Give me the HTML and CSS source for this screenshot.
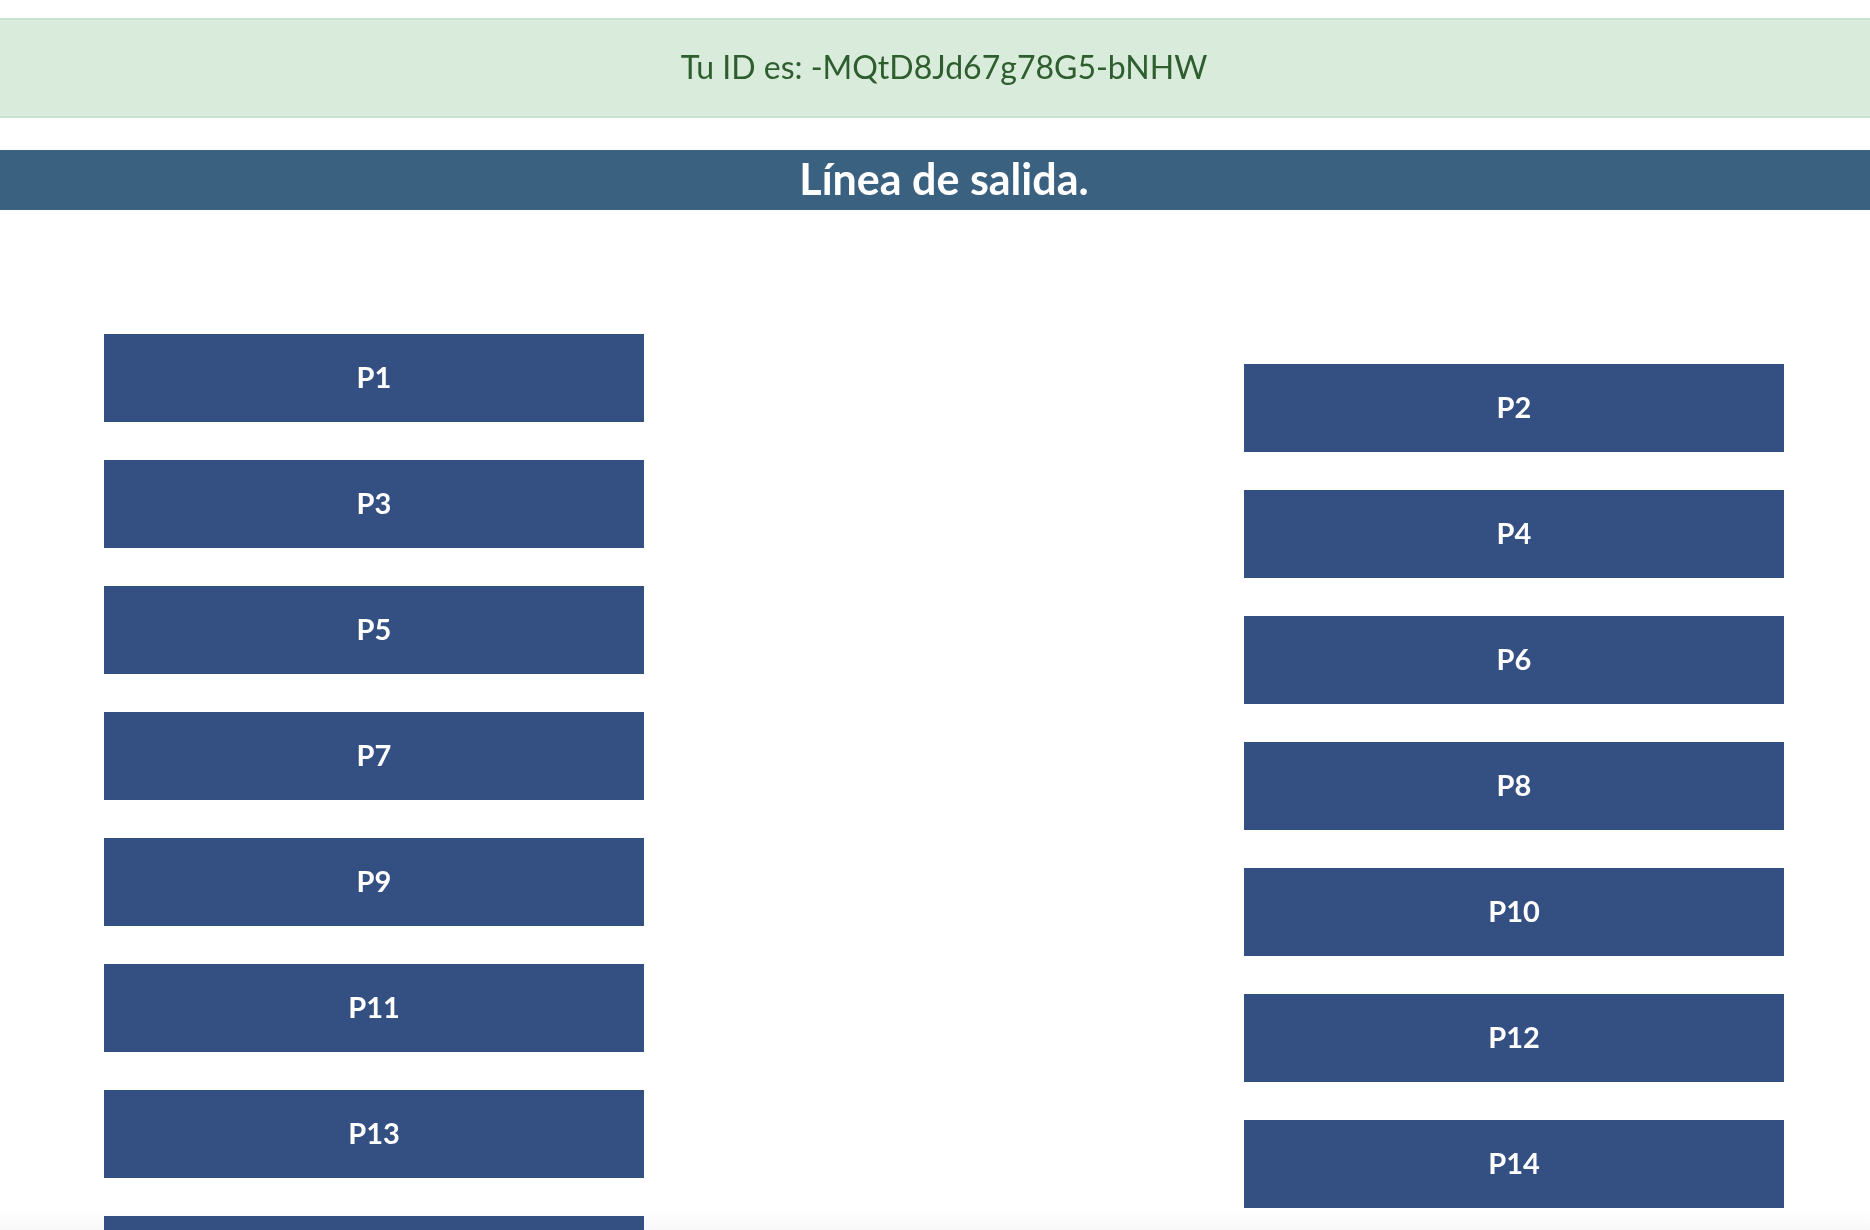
FILE: index.html
```html
<!DOCTYPE html>
<html lang="es">
<head>
<meta charset="utf-8">
<title>Línea de salida</title>
<link rel="stylesheet" href="styles.css">
</head>
<body>
  <div class="alert">Tu ID es: -MQtD8Jd67g78G5-bNHW</div>
  <h1 class="title">Línea de salida.</h1>
  <main class="grid">
    <div class="col col-left">
      <button class="pos">P1</button>
      <button class="pos">P3</button>
      <button class="pos">P5</button>
      <button class="pos">P7</button>
      <button class="pos">P9</button>
      <button class="pos">P11</button>
      <button class="pos">P13</button>
      <button class="pos">P15</button>
    </div>
    <div class="col col-right">
      <button class="pos">P2</button>
      <button class="pos">P4</button>
      <button class="pos">P6</button>
      <button class="pos">P8</button>
      <button class="pos">P10</button>
      <button class="pos">P12</button>
      <button class="pos">P14</button>
    </div>
  </main>
  <div class="fade"></div>
</body>
</html>
```
FILE: styles.css
```css
html {
  scrollbar-width: none;
}
html::-webkit-scrollbar {
  display: none;
}
body {
  margin: 0;
  padding-top: 18px;
  font-family: Lato, "Open Sans", "Liberation Sans", sans-serif;
  background: transparent;
}
.alert {
  height: 92px;
  padding: 0 0 4px 18px;
  border-top: 2px solid #c8e2cb;
  border-bottom: 2px solid #c8e2cb;
  background: #d9ebdb;
  color: #2e5e2e;
  font-size: 32px;
  font-weight: 400;
  display: flex;
  align-items: center;
  justify-content: center;
  box-sizing: content-box;
}
.title {
  margin: 32px 0 0;
  padding-left: 18px;
  height: 60px;
  line-height: 58px;
  background: #3b6180;
  color: #fff;
  font-size: 43px;
  font-weight: 700;
  text-align: center;
}
.grid {
  display: grid;
  grid-template-columns: 540px 540px;
  column-gap: 600px;
  padding-left: 104px;
  margin-top: 124px;
}
.col {
  display: flex;
  flex-direction: column;
  gap: 38px;
}
.col-right {
  padding-top: 30px;
}
.pos {
  height: 88px;
  width: 540px;
  border: 0;
  padding: 0 0 4px;
  background: #344f82;
  color: #fff;
  font-family: Lato, "Open Sans", "Liberation Sans", sans-serif;
  font-size: 29px;
  font-weight: 700;
  cursor: pointer;
}
.fade {
  position: fixed;
  left: 0;
  right: 0;
  bottom: 0;
  height: 20px;
  background: linear-gradient(#ffffff, #f8f8f8);
  z-index: -1;
}
```
